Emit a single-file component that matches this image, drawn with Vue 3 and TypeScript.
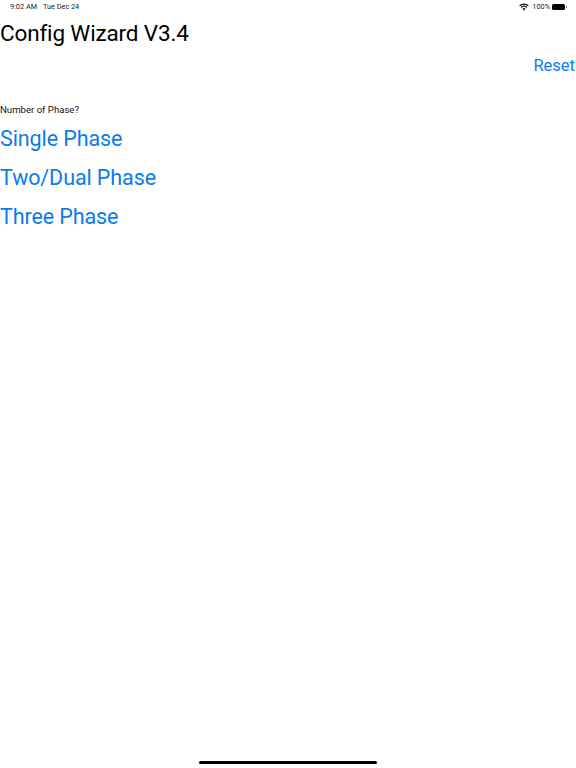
<script setup lang="ts">
const options: string[] = ['Single Phase', 'Two/Dual Phase', 'Three Phase']
</script>

<template>
  <div class="screen">
    <header class="status">
      <div class="status-left">
        <span>9:02 AM</span>
        <span>Tue Dec 24</span>
      </div>
      <div class="status-right">
        <svg class="wifi" width="10" height="8" viewBox="0 0 10 8" aria-hidden="true">
          <path d="M5 7.6 3.4 5.8a2.3 2.3 0 0 1 3.2 0z" fill="#111" />
          <path d="M2.6 5 1.7 4a4.8 4.8 0 0 1 6.6 0l-.9 1a3.5 3.5 0 0 0-4.8 0z" fill="#111" />
          <path d="M1.1 3.3.2 2.3a7 7 0 0 1 9.6 0l-.9 1a5.7 5.7 0 0 0-7.8 0z" fill="#111" />
        </svg>
        <span>100%</span>
        <div class="battery"><div class="battery-fill"></div></div>
        <div class="battery-cap"></div>
      </div>
    </header>
    <h1 class="title">Config Wizard V3.4</h1>
    <div class="reset-row"><span class="link reset">Reset</span></div>
    <p class="question">Number of Phase?</p>
    <ul class="options">
      <li v-for="o in options" :key="o" class="link option">{{ o }}</li>
    </ul>
    <div class="spacer"></div>
    <footer class="home-row"><div class="home"></div></footer>
  </div>
</template>

<style scoped>
.screen {
  width: 576px;
  height: 768px;
  display: flex;
  flex-direction: column;
  background: #fff;
  font-family: Roboto, "Liberation Sans", sans-serif;
  color: #000;
  overflow: hidden;
}
.status {
  height: 14px;
  display: flex;
  justify-content: space-between;
  align-items: center;
  padding: 0 9px 0 10px;
  font-size: 7.3px;
  line-height: 14px;
  color: #222;
}
.status-left { display: flex; gap: 6px; }
.status-right { display: flex; align-items: center; gap: 2px; }
.wifi { display: block; margin-right: 1px; }
.battery {
  width: 13px;
  height: 6px;
  border-radius: 1.5px;
  margin-left: 0;
}
.battery-fill { width: 100%; height: 100%; background: #000; border-radius: 1.5px; }
.battery-cap { width: 1px; height: 2px; background: #777; margin-left: -1px; }
.title {
  margin: 5px 0 0;
  font-size: 22.5px;
  letter-spacing: -0.15px;
  font-weight: 400;
  line-height: 28px;
}
.reset-row {
  display: flex;
  justify-content: flex-end;
  padding-right: 1px;
  margin-top: 9px;
}
.link { color: #0a7cec; }
.reset { font-size: 16.5px; line-height: 20px; }
.question {
  margin: 28px 0 0;
  font-size: 9.6px;
  line-height: 12px;
  color: #111;
}
.options {
  list-style: none;
  margin: 10px 0 0;
  padding: 0;
  display: flex;
  flex-direction: column;
  gap: 13px;
}
.option { font-size: 21.5px; letter-spacing: -0.1px; line-height: 26px; }
.spacer { flex: 1; }
.home-row { display: flex; justify-content: center; padding-bottom: 4px; }
.home { width: 178px; height: 3px; border-radius: 2px; background: #000; }
</style>
